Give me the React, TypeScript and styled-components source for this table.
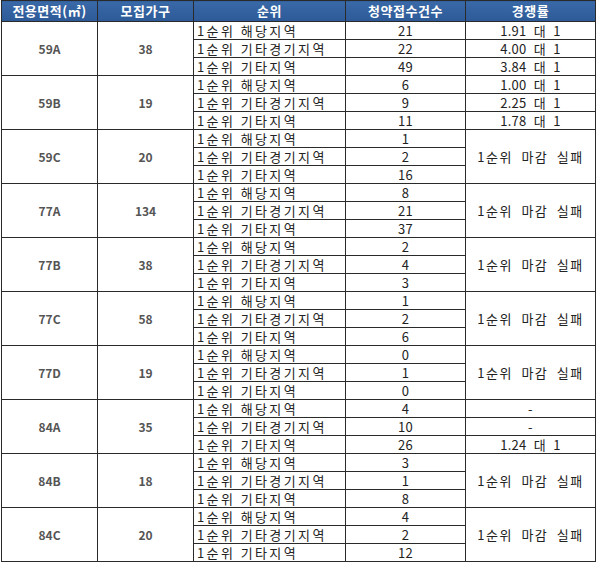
import React from 'react';
import styled, { createGlobalStyle } from 'styled-components';

type Row = { rank: string; count: string; ratio?: string };
type Group = { area: string; units: string; rows: Row[]; merged?: string };

const RANKS = ['1순위 해당지역', '1순위 기타경기지역', '1순위 기타지역'];
const FAIL = '1순위 마감 실패';

const build = (counts: string[], ratios?: string[]): Row[] =>
	counts.map((count, i) => ({
		rank: RANKS[i],
		count,
		ratio: ratios ? ratios[i] : undefined,
	}));

const GROUPS: Group[] = [
	{ area: '59A', units: '38', rows: build(['21', '22', '49'], ['1.91 대 1', '4.00 대 1', '3.84 대 1']) },
	{ area: '59B', units: '19', rows: build(['6', '9', '11'], ['1.00 대 1', '2.25 대 1', '1.78 대 1']) },
	{ area: '59C', units: '20', rows: build(['1', '2', '16']), merged: FAIL },
	{ area: '77A', units: '134', rows: build(['8', '21', '37']), merged: FAIL },
	{ area: '77B', units: '38', rows: build(['2', '4', '3']), merged: FAIL },
	{ area: '77C', units: '58', rows: build(['1', '2', '6']), merged: FAIL },
	{ area: '77D', units: '19', rows: build(['0', '1', '0']), merged: FAIL },
	{ area: '84A', units: '35', rows: build(['4', '10', '26'], ['-', '-', '1.24 대 1']) },
	{ area: '84B', units: '18', rows: build(['3', '1', '8']), merged: FAIL },
	{ area: '84C', units: '20', rows: build(['4', '2', '12']), merged: FAIL },
];

const App = () => {
	return (
		<>
			<GlobalStyle />
			<Page>
				<Table>
					<colgroup>
						<col style={{ width: 96 }} />
						<col style={{ width: 96 }} />
						<col style={{ width: 152 }} />
						<col style={{ width: 120 }} />
						<col style={{ width: 130 }} />
					</colgroup>
					<thead>
						<tr>
							<Head>전용면적(㎡)</Head>
							<Head>모집가구</Head>
							<Head>순위</Head>
							<Head>청약접수건수</Head>
							<Head>경쟁률</Head>
						</tr>
					</thead>
					<tbody>
						{GROUPS.map((g) =>
							g.rows.map((r, i) => (
								<tr key={g.area + i}>
									{i === 0 ? (
										<>
											<Label rowSpan={3}>{g.area}</Label>
											<Label rowSpan={3}>{g.units}</Label>
										</>
									) : null}
									<Rank>{r.rank}</Rank>
									<Cell>{r.count}</Cell>
									{g.merged ? (
										i === 0 ? (
											<Fail rowSpan={3}>{g.merged}</Fail>
										) : null
									) : (
										<Cell>{r.ratio}</Cell>
									)}
								</tr>
							)),
						)}
					</tbody>
				</Table>
			</Page>
		</>
	);
};

export default App;

const GlobalStyle = createGlobalStyle`
	html, body {
		margin: 0;
		padding: 0;
		background: #fff;
	}
	body {
		font-family: "Noto Sans CJK KR", "Noto Sans", sans-serif;
	}
`;

const Page = styled.div`
	width: 600px;
	height: 566px;
	padding: 0 4px 0 1px;
	box-sizing: border-box;
	overflow: hidden;
	background: #fff;
`;

const Table = styled.table`
	border-collapse: collapse;
	table-layout: fixed;
	width: 595px;
	border: 1px solid #2a2a2a;
	color: #222;

	td,
	th {
		border: 1px solid #2a2a2a;
		padding: 0;
		overflow: hidden;
		white-space: nowrap;
	}
`;

const Head = styled.th`
	height: 20px;
	background: linear-gradient(#3a69a8, #2d5a97);
	color: #fff;
	font-size: 13px;
	font-weight: 700;
	text-align: center;
	line-height: 18px;
	letter-spacing: 0.5px;
`;

const Label = styled.td`
	font-size: 12px;
	font-weight: 700;
	color: #555;
	text-align: center;
	vertical-align: middle;
`;

const Rank = styled.td`
	height: 17px;
	font-size: 13px;
	line-height: 17px;
	letter-spacing: 2.4px;
	padding-left: 3px !important;
	text-align: left;
`;

const Cell = styled.td`
	font-size: 13px;
	line-height: 17px;
	text-align: center;
	vertical-align: middle;
	letter-spacing: 0.3px;
	word-spacing: 4px;
`;

const Fail = styled(Cell)`
	letter-spacing: 1.5px;
	word-spacing: 4px;
`;
